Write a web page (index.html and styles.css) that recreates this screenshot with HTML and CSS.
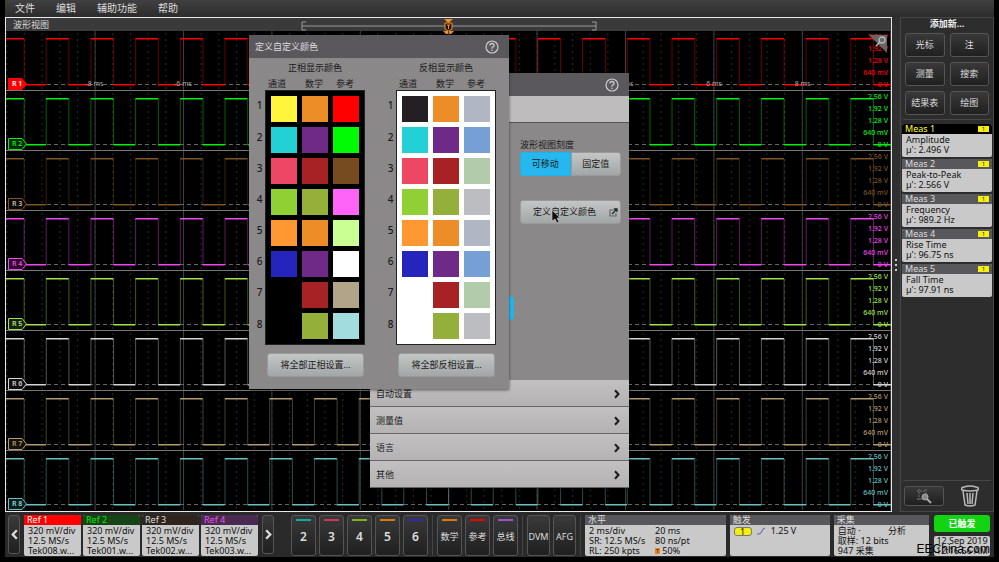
FILE: index.html
```html
<!DOCTYPE html>
<html lang="zh-CN">
<head>
<meta charset="utf-8">
<title>波形视图</title>
<meta name="viewport" content="width=device-width, initial-scale=1">
<link rel="stylesheet" href="styles.css">
</head>
<body>
<svg class="defs" aria-hidden="true">
  <defs>
    <pattern id="dots" x="9" width="17.68" height="6" patternUnits="userSpaceOnUse">
      <rect x="9" y="2" width="1" height="2" fill="#2c2c2c"/>
    </pattern>
  </defs>
  <symbol id="wave" viewBox="0 0 885 59" preserveAspectRatio="none">
    <rect width="885" height="59" fill="url(#dots)"/>
    <path d="M88.6 29.5H885" stroke="#3c3e40" stroke-width="59" stroke-dasharray="1 87.4"/>
    <path d="M20 53.5H885" stroke="#666" stroke-dasharray="4 3"/>
    <g stroke="currentColor" fill="none">
      <path d="M-27 30.5H885" stroke-width="46" stroke-dasharray="1 43.7" opacity=".4"/>
      <path d="M-5 30.5H868" stroke-width="46" stroke-dasharray="1 43.7" opacity=".4"/>
      <path d="M-4.7 7.7H868" stroke-width="1.6" stroke-dasharray="22.7 22"/>
      <path d="M18 53.7H885" stroke-width="1.6" stroke-dasharray="22 22.7"/>
    </g>
  </symbol>
  <symbol id="flag" viewBox="0 0 20 12">
    <path d="M.5 .5H14L18.500 6L14 11.500H.5Z" fill="var(--tag)" stroke="currentColor"/>
  </symbol>
  <symbol id="help" viewBox="0 0 14 14">
    <circle cx="7" cy="7" r="6" fill="none" stroke="#ccc" stroke-width="1.200"/>
    <path d="M5 5.500Q5 3.500 7 3.500T9 5.400Q9 6.400 7.800 7T7 8.700" fill="none" stroke="#ccc" stroke-width="1.300"/>
    <circle cx="7" cy="10.300" r=".8" fill="#ccc"/>
  </symbol>
  <symbol id="next" viewBox="0 0 6 9">
    <path d="M1 .8L4.500 4.500L1 8.200" fill="none" stroke="currentColor" stroke-width="2"/>
  </symbol>
</svg>

<div class="app">
  <nav class="menu">
    <a href="#">文件</a><a href="#">编辑</a><a href="#">辅助功能</a><a href="#">帮助</a>
  </nav>

  <div class="main">
    <main class="view">
      <header class="view-head">
        <span>波形视图</span>
        <svg class="range" viewBox="0 0 296 16">
          <path d="M5 4H1V12H5M1 8H295M291 4H295V12H291" fill="none" stroke="#999"/>
          <path d="M143 1H152L147.500 5ZM142 13H153L150 16H145Z" fill="#f0912a"/>
          <path d="M144 5H151V11L147.500 13L144 11Z" fill="#221507" stroke="#f0912a"/>
          <path d="M146 7H149M147.500 7V11" stroke="#f0912a"/>
        </svg>
      </header>
      <div class="plot">
        <section class="trace r1">
          <svg class="wave"><use href="#wave"/></svg>
          <div class="axis"><span>-8 ms</span><span>-6 ms</span><span></span><span></span><span></span><span></span><span>4 ms</span><span>6 ms</span><span>8 ms</span></div>
          <div class="tag"><svg><use href="#flag"/></svg><b>R 1</b></div>
          <div class="scale"><span>2.56 V</span><span>1.92 V</span><span>1.28 V</span><span>640 mV</span><span>0 V</span></div>
          <svg class="corner" viewBox="0 0 18 18"><path d="M0 0H18V18Z" fill="#666"/><circle cx="13" cy="5" r="3" fill="none" stroke="#bbb" stroke-width="1.300"/><path d="M11 7L7 11" stroke="#bbb" stroke-width="1.600"/></svg>
        </section>
        <section class="trace r2">
          <svg class="wave"><use href="#wave"/></svg>
          <div class="tag"><svg><use href="#flag"/></svg><b>R 2</b></div>
          <div class="scale"><span>2.56 V</span><span>1.92 V</span><span>1.28 V</span><span>640 mV</span><span>0 V</span></div>
        </section>
        <section class="trace r3">
          <svg class="wave"><use href="#wave"/></svg>
          <div class="tag"><svg><use href="#flag"/></svg><b>R 3</b></div>
          <div class="scale"><span>2.56 V</span><span>1.92 V</span><span>1.28 V</span><span>640 mV</span><span>0 V</span></div>
        </section>
        <section class="trace r4">
          <svg class="wave"><use href="#wave"/></svg>
          <div class="tag"><svg><use href="#flag"/></svg><b>R 4</b></div>
          <div class="scale"><span>2.56 V</span><span>1.92 V</span><span>1.28 V</span><span>640 mV</span><span>0 V</span></div>
        </section>
        <section class="trace r5">
          <svg class="wave"><use href="#wave"/></svg>
          <div class="tag"><svg><use href="#flag"/></svg><b>R 5</b></div>
          <div class="scale"><span>2.56 V</span><span>1.92 V</span><span>1.28 V</span><span>640 mV</span><span>0 V</span></div>
        </section>
        <section class="trace r6">
          <svg class="wave"><use href="#wave"/></svg>
          <div class="tag"><svg><use href="#flag"/></svg><b>R 6</b></div>
          <div class="scale"><span>2.56 V</span><span>1.92 V</span><span>1.28 V</span><span>640 mV</span><span>0 V</span></div>
        </section>
        <section class="trace r7">
          <svg class="wave"><use href="#wave"/></svg>
          <div class="tag"><svg><use href="#flag"/></svg><b>R 7</b></div>
          <div class="scale"><span>2.56 V</span><span>1.92 V</span><span>1.28 V</span><span>640 mV</span><span>0 V</span></div>
        </section>
        <section class="trace r8">
          <svg class="wave"><use href="#wave"/></svg>
          <div class="tag"><svg><use href="#flag"/></svg><b>R 8</b></div>
          <div class="scale"><span>2.56 V</span><span>1.92 V</span><span>1.28 V</span><span>640 mV</span><span>0 V</span></div>
        </section>
      </div>
    </main>

    <div class="grip"><i></i><i></i><i></i></div>

    <aside class="side">
      <h2>添加新...</h2>
      <div class="add">
        <button class="key">光标</button><button class="key">注</button>
        <button class="key">测量</button><button class="key">搜索</button>
        <button class="key">结果表</button><button class="key">绘图</button>
      </div>
      <div class="cards">
        <article class="meas active"><h3>Meas 1<em>1</em></h3><p>Amplitude<br>µ': 2.496 V</p></article>
        <article class="meas"><h3>Meas 2<em>1</em></h3><p>Peak-to-Peak<br>µ': 2.566 V</p></article>
        <article class="meas"><h3>Meas 3<em>1</em></h3><p>Frequency<br>µ': 989.2 Hz</p></article>
        <article class="meas"><h3>Meas 4<em>1</em></h3><p>Rise Time<br>µ': 96.75 ns</p></article>
        <article class="meas"><h3>Meas 5<em>1</em></h3><p>Fall Time<br>µ': 97.91 ns</p></article>
      </div>
      <div class="tools">
        <button class="key zoom" aria-label="缩放">
          <svg width="16" height="16" viewBox="0 0 16 16"><path d="M1 3H10M1 11H7M3 1V13M10 1V6" stroke="#777" stroke-dasharray="2 1" fill="none"/><circle cx="9" cy="9" r="3" fill="#888" stroke="#aaa"/><path d="M11 11L15 15" stroke="#aaa" stroke-width="2"/></svg>
        </button>
        <button class="trash" aria-label="删除">
          <svg width="20" height="22" viewBox="0 0 20 22"><g fill="none" stroke="#b8b8b8" stroke-width="1.500"><path d="M2 5Q1 2 4 2Q10 0 16 2Q19 2 18 5Q10 7 2 5Z"/><path d="M3 6L5 20Q10 22 15 20L17 6M7 8L8 19M10 8V19M13 8L12 19"/></g></svg>
        </button>
      </div>
    </aside>
  </div>

  <footer class="bar">
    <button class="key arrow" aria-label="上一页"><svg class="flip" width="7" height="11"><use href="#next"/></svg></button>
    <div class="refs">
      <article class="ref f1"><h3>Ref 1</h3><p>320 mV/div<br>12.5 MS/s<br>Tek008.w...</p></article>
      <article class="ref f2"><h3>Ref 2</h3><p>320 mV/div<br>12.5 MS/s<br>Tek001.w...</p></article>
      <article class="ref f3"><h3>Ref 3</h3><p>320 mV/div<br>12.5 MS/s<br>Tek002.w...</p></article>
      <article class="ref f4"><h3>Ref 4</h3><p>320 mV/div<br>12.5 MS/s<br>Tek003.w...</p></article>
    </div>
    <button class="key arrow" aria-label="下一页"><svg width="7" height="11"><use href="#next"/></svg></button>
    <div class="group first">
      <button class="key ch c-cyan">2</button><button class="key ch c-pink">3</button><button class="key ch c-lime">4</button><button class="key ch c-orange">5</button><button class="key ch c-blue">6</button>
    </div>
    <div class="group">
      <button class="key ch word c-orange">数学</button><button class="key ch word c-red">参考</button><button class="key ch word c-violet">总线</button>
    </div>
    <div class="group">
      <button class="key ch word c-none">DVM</button><button class="key ch word c-none">AFG</button>
    </div>
    <section class="info horiz"><h3>水平</h3>
      <div class="cols"><p>2 ms/div<br>SR: 12.5 MS/s<br>RL: 250 kpts</p><p>20 ms<br>80 ns/pt<br><i class="t">T</i> 50%</p></div>
    </section>
    <section class="info trig"><h3>触发</h3>
      <p><em>1</em><svg width="9" height="8" viewBox="0 0 9 8"><path d="M0 7H2Q4 7 5 4T8 1" fill="none" stroke="#5b5bb0"/></svg>1.25 V</p>
    </section>
    <section class="info acq"><h3>采集</h3>
      <p class="split"><span>自动 ·</span><span>分析</span></p><p>取样: 12 bits<br>947 采集</p>
    </section>
    <div class="status">
      <button class="run">已触发</button>
      <div class="clock">12.Sep 2019<br>12:16:56 AM<span class="mark">EEChina.com</span></div>
    </div>
  </footer>
</div>

<section class="dialog prefs">
  <header><span></span><button class="help" aria-label="帮助"><svg><use href="#help"/></svg></button></header>
  <div class="tab"></div>
  <div class="prefs-body">
    <div class="left"><button class="soft on" aria-label="选项"></button></div>
    <div class="right">
      <span class="cap">波形视图刻度</span>
      <div class="toggle"><button class="soft on">可移动</button><button class="soft">固定值</button></div>
      <button class="soft define">定义自定义颜色
        <svg width="9" height="9" viewBox="0 0 9 9"><path d="M5 2H1V8H7V5" fill="none" stroke="#666" stroke-width="1.200"/><path d="M3 6L8 1M5 1H8V4" fill="none" stroke="#222" stroke-width="1.300"/></svg>
      </button>
    </div>
  </div>
  <button class="fold">自动设置<svg><use href="#next"/></svg></button>
  <button class="fold">测量值<svg><use href="#next"/></svg></button>
  <button class="fold">语言<svg><use href="#next"/></svg></button>
  <button class="fold">其他<svg><use href="#next"/></svg></button>
</section>

<section class="dialog colors">
  <header><span>定义自定义颜色</span><button class="help" aria-label="帮助"><svg><use href="#help"/></svg></button></header>
  <div class="sets">
    <div class="set">
      <h4>正相显示颜色</h4>
      <table>
        <thead><tr><td></td><th>通道</th><th>数学</th><th>参考</th></tr></thead>
        <tbody class="dark">
          <tr><th>1</th><td><i class="yellow"></i></td><td><i class="orange"></i></td><td><i class="red"></i></td></tr>
          <tr><th>2</th><td><i class="cyan"></i></td><td><i class="purple"></i></td><td><i class="green"></i></td></tr>
          <tr><th>3</th><td><i class="pink"></i></td><td><i class="brick"></i></td><td><i class="brown"></i></td></tr>
          <tr><th>4</th><td><i class="lime"></i></td><td><i class="olive"></i></td><td><i class="magenta"></i></td></tr>
          <tr><th>5</th><td><i class="amber"></i></td><td><i class="orange"></i></td><td><i class="mint"></i></td></tr>
          <tr><th>6</th><td><i class="blue"></i></td><td><i class="purple"></i></td><td><i class="white"></i></td></tr>
          <tr><th>7</th><td></td><td><i class="brick"></i></td><td><i class="tan"></i></td></tr>
          <tr><th>8</th><td></td><td><i class="olive"></i></td><td><i class="aqua"></i></td></tr>
        </tbody>
      </table>
      <button class="soft all">将全部正相设置...</button>
    </div>
    <div class="set">
      <h4>反相显示颜色</h4>
      <table>
        <thead><tr><td></td><th>通道</th><th>数学</th><th>参考</th></tr></thead>
        <tbody class="light">
          <tr><th>1</th><td><i class="black"></i></td><td><i class="orange"></i></td><td><i class="steel"></i></td></tr>
          <tr><th>2</th><td><i class="cyan"></i></td><td><i class="purple"></i></td><td><i class="sky"></i></td></tr>
          <tr><th>3</th><td><i class="pink"></i></td><td><i class="brick"></i></td><td><i class="sage"></i></td></tr>
          <tr><th>4</th><td><i class="lime"></i></td><td><i class="olive"></i></td><td><i class="silver"></i></td></tr>
          <tr><th>5</th><td><i class="amber"></i></td><td><i class="orange"></i></td><td><i class="steel"></i></td></tr>
          <tr><th>6</th><td><i class="blue"></i></td><td><i class="purple"></i></td><td><i class="sky"></i></td></tr>
          <tr><th>7</th><td></td><td><i class="brick"></i></td><td><i class="sage"></i></td></tr>
          <tr><th>8</th><td></td><td><i class="olive"></i></td><td><i class="silver"></i></td></tr>
        </tbody>
      </table>
      <button class="soft all">将全部反相设置...</button>
    </div>
  </div>
</section>

<svg class="pointer" viewBox="0 0 10 15"><path d="M1 1V12L4 10L6 14L8 13L6 9H9Z" fill="#111" stroke="#ccc" stroke-width=".6"/></svg>
</body>
</html>
```
FILE: styles.css
```css
* { box-sizing: border-box; margin: 0; padding: 0; }

body {
  background: #000;
  color: #ddd;
  font: 9px/10px "Noto Sans", "Noto Sans CJK SC", sans-serif;
}

button { font: inherit; color: inherit; border: 0; background: none; white-space: nowrap; }
a { color: inherit; text-decoration: none; }
i, em { font-style: normal; }
h2, h3, h4 { font-size: 9px; font-weight: 400; }
svg { display: block; }
.defs { position: absolute; width: 0; height: 0; }

.app {
  display: flex;
  flex-direction: column;
  min-height: 100vh;
  padding: 0 5px 5px;
}

.menu {
  display: flex;
  align-items: center;
  gap: 21px;
  height: 17px;
  padding-left: 10px;
  background: linear-gradient(#404040, #2c2c2c);
  font-size: 10px;
  line-height: 14px;
}
.menu a { padding-bottom: 2px; }

.main { display: flex; flex: 1; background: #2f2f2f; }

/* waveform view */
.view {
  display: flex;
  flex: 1;
  flex-direction: column;
  border: 1px solid #e8e8e8;
}

.view-head {
  display: flex;
  align-items: center;
  position: relative;
  height: 13px;
  padding-left: 7px;
  background: #3a3a3a;
}

.range { position: absolute; top: 0; left: 50%; width: 296px; height: 16px; margin-left: -148px; }
.plot { display: flex; flex: 1; flex-direction: column; background: #000; }

.trace {
  display: flex;
  flex: 1;
  justify-content: flex-end;
  position: relative;
  border-bottom: 1px solid #777;
}
.trace:last-child { border-bottom-color: #000; }

.wave { position: absolute; inset: 0; width: 100%; height: 100%; }

.tag { position: absolute; left: 2px; bottom: 0; color: inherit; }
.tag svg { width: 20px; height: 12px; }
.tag b { position: absolute; top: 1px; left: 4px; font-size: 7px; font-weight: 600; white-space: nowrap; color: var(--label, currentColor); }

.scale {
  display: flex;
  flex-direction: column;
  justify-content: space-between;
  position: relative;
  padding-right: 3px;
  text-align: right;
  font-size: 7px;
  font-weight: 500;
  line-height: 11px;
}

.axis {
  display: flex;
  position: absolute;
  right: 5%;
  bottom: 0;
  left: 5%;
  color: #aaa;
  font-size: 7px;
  line-height: 12px;
}
.axis span { flex: 1; text-align: center; }

.corner { position: absolute; top: 4px; right: 4px; width: 18px; height: 18px; }

.r1 { color: #f00; --tag: #f00; --label: #fff; }
.r2 { color: #00f010; --tag: #052405; }
.r3 { color: #7c5426; --tag: #0c0805; --label: #c8c0b8; }
.r4 { color: #f244f2; --tag: #260a26; }
.r5 { color: #9ce448; --tag: #16240c; --label: #c0e090; }
.r6 { color: #d4d4d4; --tag: #101010; }
.r7 { color: #b09c70; --tag: #15120c; }
.r8 { color: #68c0c0; --tag: #0a1c1c; --label: #9adada; }

.grip {
  display: flex;
  flex-direction: column;
  justify-content: center;
  align-items: center;
  gap: 3px;
  width: 8px;
}
.grip i { width: 2px; height: 2px; background: #ccc; }

/* right panel */
.side {
  display: flex;
  flex-direction: column;
  width: 94px;
  padding: 0 2px;
  border: 1px solid #474747;
  background: #2d2d2d;
}
.side h2 { text-align: center; font-weight: 700; line-height: 11px; color: #eee; }

.add {
  display: grid;
  grid-template-columns: 1fr 1fr;
  gap: 5px;
  padding: 4px 2px;
  border-bottom: 1px solid #474747;
}

.key {
  border: 1px solid #555;
  border-radius: 3px;
  background: linear-gradient(#393939, #202020);
  color: #ddd;
}
.add .key { height: 24px; }

.cards { display: grid; gap: 2px; margin: 4px -1px 0; }

.meas { border-radius: 2px; background: #c9c9c9; color: #111; }
.meas h3 {
  display: flex;
  justify-content: space-between;
  align-items: center;
  padding: 0 3px;
  border-radius: 2px 2px 0 0;
  background: #58585c;
  color: #ddd;
}
.meas.active h3 { background: #000; color: #ff3; }
.meas em { width: 11px; height: 6px; background: #f5ee10; color: #222; font-size: 6px; line-height: 6px; text-align: center; }
.meas p { height: 23px; padding: 1px 4px; }

.tools {
  display: flex;
  align-items: center;
  justify-content: space-between;
  height: 31px;
  margin-top: auto;
  padding: 0 11px 0 1px;
  border-top: 1px solid #474747;
}
.zoom { display: grid; place-items: center; width: 40px; height: 20px; }

/* bottom bar */
.bar { display: flex; gap: 4px; height: 45px; padding: 3px 4px 1px 3px; background: #2a2a2a; }

.arrow { display: grid; place-items: center; width: 12px; height: 39px; }
.flip { transform: scaleX(-1); }
.refs { display: flex; gap: 2px; }

.ref { width: 57px; border-radius: 2px; background: #c9c9c9; color: #111; }
.ref h3 { padding-left: 3px; border-radius: 2px 2px 0 0; }
.ref p { padding: 1px 0 0 4px; white-space: nowrap; }
.f1 h3 { background: #f00; color: #fff; }
.f2 h3 { background: #174417; color: #0e0; }
.f3 h3 { background: #2e261e; color: #ddd; }
.f4 h3 { background: #4a2a52; color: #e455e4; }

.group { display: flex; gap: 3px; padding-right: 4px; border-right: 1px solid #444; }
.group.first { margin-left: 13px; }

.ch { position: relative; width: 25px; padding-top: 3px; font-size: 12px; font-weight: 600; }
.ch::before { content: ""; position: absolute; top: 3px; right: 4px; left: 4px; height: 2px; background: var(--line); }
.word { font-size: 9px; font-weight: 400; }
.c-cyan { --line: #10a8a8; }
.c-pink { --line: #c83a58; }
.c-lime { --line: #82b020; }
.c-orange { --line: #d87a18; }
.c-blue { --line: #2c2cb0; }
.c-red { --line: #e00; }
.c-violet { --line: #a050d0; }
.c-none { --line: #3a3a3a; }
.c-none.word { width: 23px; }

.info { border-radius: 2px; background: #c9c9c9; color: #111; }
.info h3 { padding-left: 3px; border-radius: 2px 2px 0 0; background: #58585c; color: #ddd; }
.info p { padding-left: 4px; white-space: nowrap; }
.horiz { flex: 139; }
.trig { flex: 99; }
.acq { flex: 94; }
.cols { display: grid; grid-template-columns: 66px 1fr; padding-top: 1px; }
.t { display: inline-block; width: 5px; height: 6px; background: #e8821e; color: #222; font-size: 5px; line-height: 6px; text-align: center; vertical-align: 1px; }
.trig p { display: flex; align-items: center; gap: 5px; padding-top: 1px; }
.trig em { width: 18px; height: 9px; border: 1px solid #777; border-radius: 3px; background: #f5ee10; line-height: 8px; text-align: center; }
.split { display: flex; justify-content: space-between; padding-top: 1px; }
.split span + span { padding-right: 23px; }

.status { display: flex; flex-direction: column; gap: 4px; width: 56px; margin-left: 1px; }
.run { height: 18px; border-radius: 3px; background: #12d412; color: #fff; font-weight: 700; }
.clock { position: relative; flex: 1; border-radius: 2px; background: #c9c9c9; color: #111; text-align: center; white-space: nowrap; }
.mark { position: absolute; right: 0; bottom: 0; color: #000; font: 12px/14px "Liberation Sans", sans-serif; }

/* dialogs */
.dialog { position: absolute; width: 260px; background: #8a8889; color: #1a1a1a; box-shadow: 0 1px 3px #0008; }
.dialog header {
  display: flex;
  align-items: center;
  justify-content: space-between;
  height: 23px;
  padding: 0 10px 0 6px;
  background: #5a585d;
  color: #ddd;
}
.help svg { width: 14px; height: 14px; }

.soft {
  height: 24px;
  border: 1px solid #9a9a9a;
  border-radius: 3px;
  background: linear-gradient(#c4c6c6, #a2a6a6);
  color: #1a1a1a;
}
.soft.on { border-color: #25b0e4; background: #25b7ee; }

.prefs { top: 73px; left: 370px; width: 259px; }
.tab { height: 27px; border-bottom: 1px solid #555; background: #bebcbd; }
.prefs-body { display: grid; grid-template-columns: 134px 101px; gap: 6px; height: 257px; padding: 14px 0 60px 10px; }
.left { display: flex; flex-direction: column; justify-content: flex-end; }
.cap { display: block; line-height: 15px; }
.toggle { display: grid; grid-template-columns: 1fr 1fr; margin-bottom: 24px; }
.toggle .soft:first-child { border-radius: 3px 0 0 3px; }
.toggle .soft:last-child { border-radius: 0 3px 3px 0; }
.define { display: flex; align-items: center; justify-content: space-between; width: 100%; padding: 0 2px 0 12px; }

.fold {
  display: flex;
  align-items: center;
  justify-content: space-between;
  width: 100%;
  height: 27px;
  padding: 1px 9px 0 6px;
  border-bottom: 1px solid #666;
  background: linear-gradient(#c2c0c1, #b4b2b3);
}
.fold svg { width: 6px; height: 10px; }

.colors { top: 35px; left: 249px; }
.sets { display: flex; justify-content: space-between; padding: 2px 12px 12px 5px; }
.set { width: 112px; }
.set h4 { padding-left: 10px; text-align: center; line-height: 15px; }
.set table { width: 111px; border-spacing: 0; table-layout: fixed; }
.set thead td { width: 11px; }
.set thead th { width: 31px; height: 15px; padding: 2px 0 0 3px; font-weight: 400; line-height: 13px; }
.set thead th:nth-child(2) { width: 32px; padding: 2px 8px 0 0; }
.set thead th:last-child { width: 37px; padding: 2px 3px 0 0; }
.set tbody th { padding-bottom: 2px; font-size: 10px; font-weight: 500; }
.set tbody td { height: 31px; padding: 5px 0 0 5px; }
.set tbody td:nth-child(2) { border-left: 1px solid #222; }
.set tbody td:last-child { border-right: 1px solid #222; }
.set tbody tr:first-child td { height: 32px; border-top: 1px solid #222; }
.set tbody tr:last-child td { height: 37px; padding-bottom: 5px; border-bottom: 1px solid #222; }
.set tbody tr:last-child th { padding-bottom: 6px; }
.dark td { background: #000; }
.light td { background: #fff; }
.set td i { display: block; width: 26px; height: 26px; }
.all { display: block; width: 97px; margin: 8px 0 0 13px; }

.yellow { background: #fff53c; }
.orange { background: #ec8d27; }
.red { background: #f00; }
.cyan { background: #22d0d5; }
.purple { background: #6e2a86; }
.green { background: #00fb04; }
.pink { background: #ec4763; }
.brick { background: #a72225; }
.brown { background: #754b1f; }
.lime { background: #91d035; }
.olive { background: #95af3b; }
.magenta { background: #ff64f8; }
.amber { background: #ff9833; }
.mint { background: #caff93; }
.blue { background: #2524bd; }
.white { background: #fff; }
.tan { background: #b2a488; }
.aqua { background: #a3dcdd; }
.black { background: #241f22; }
.steel { background: #b1b6c4; }
.sky { background: #769fd5; }
.sage { background: #b1cbab; }
.silver { background: #bbbdc0; }

.pointer { position: absolute; top: 209px; left: 551px; width: 10px; height: 15px; }
```
